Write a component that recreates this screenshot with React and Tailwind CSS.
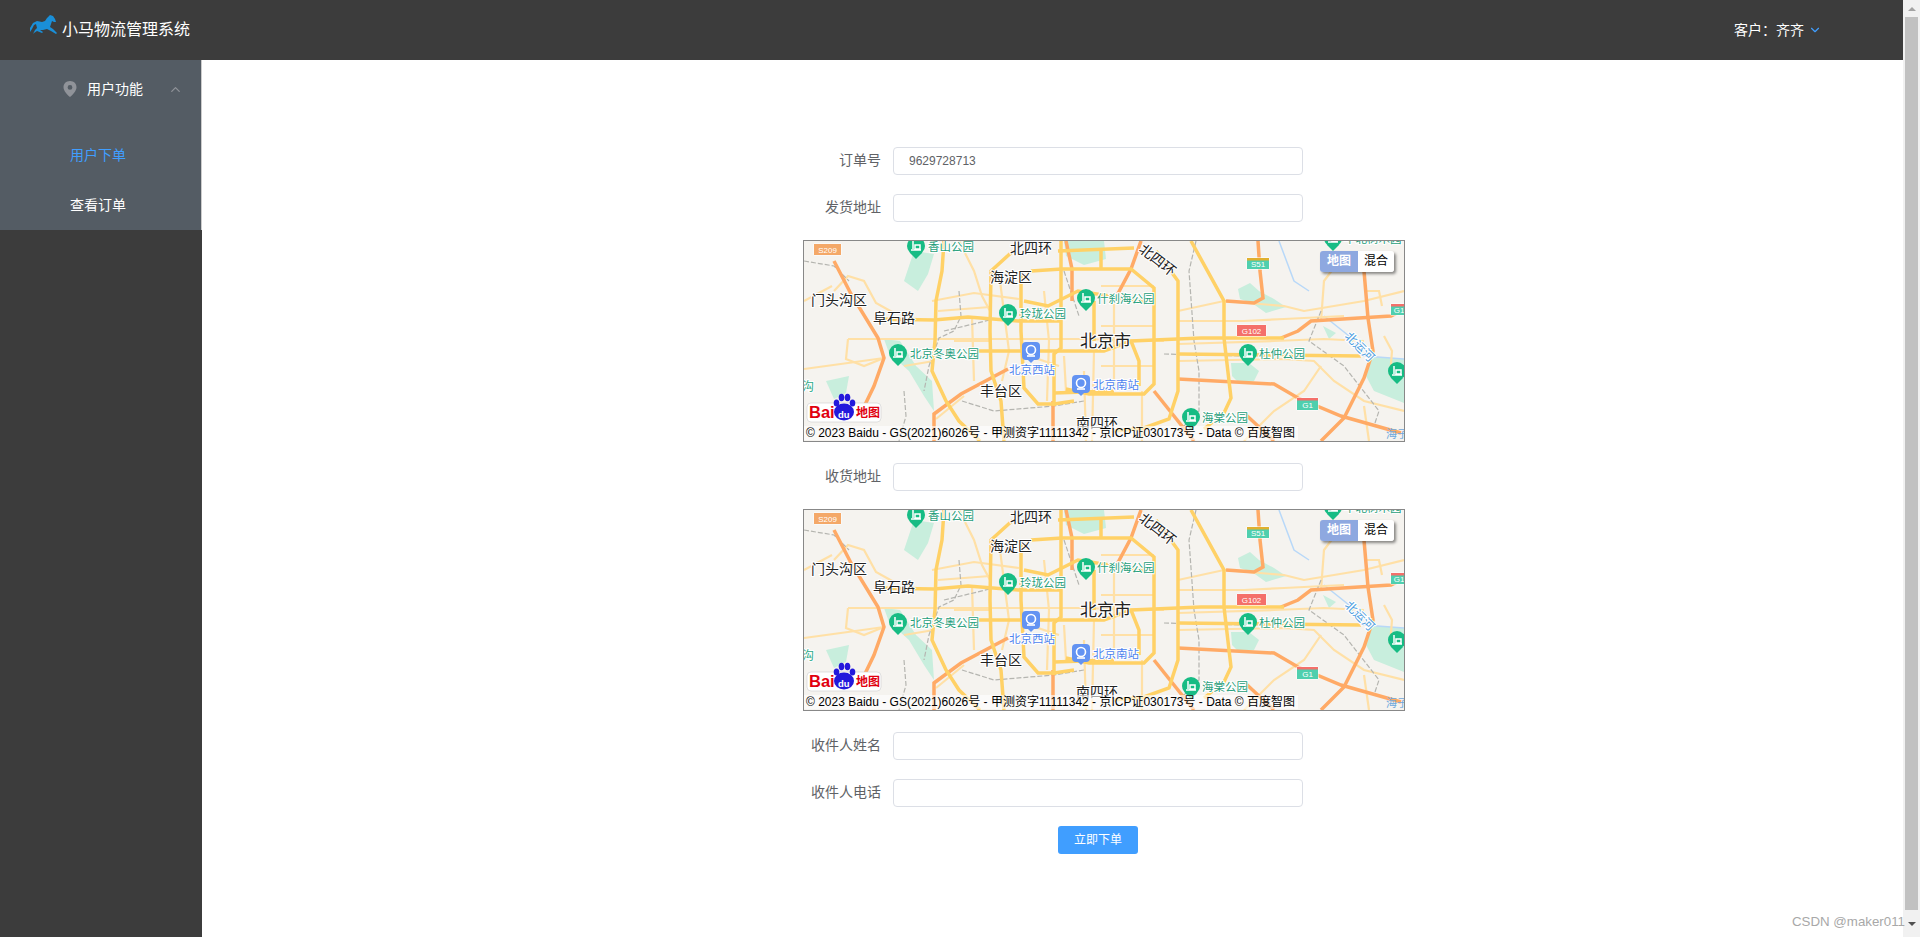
import { ChevronDown, ChevronUp } from 'lucide-react';

// road polylines in map coordinates (map is 600x200)
const LIGHT_ROADS = [
  'M44 98 L274 98 L360 100',
  'M30 50 L44 35 L60 40 L72 62 L90 72',
  'M44 98 L42 118 L60 125 L80 117',
  'M0 128 L44 122 L80 117',
  'M128 60 L170 52 L215 58',
  'M134 70 L186 66',
  'M168 76 L170 140',
  'M196 40 L205 110 L198 140',
  'M240 50 L245 100 L243 160',
  'M290 110 L288 200',
  'M310 60 L310 145',
  'M374 70 L420 60 L480 65 L500 70 L560 60 L600 50',
  'M374 80 L440 80 L480 78 L540 75',
  'M374 103 L470 100 L520 98 L560 100',
  'M374 120 L480 118 L510 120 L530 140 L560 160 L600 170',
  'M517 125 L500 150 L470 170 L440 200',
  'M517 80 L520 40 L535 20',
  'M560 50 L575 50 L578 65',
  'M580 95 L588 110 L586 135',
  'M560 165 L565 200',
  'M132 178 L160 155',
  'M338 150 L338 200',
  'M280 130 L282 200',
  'M155 0 L170 30 L178 55 L186 70',
  'M260 115 L262 150',
  'M100 125 L130 120',
  'M0 60 L28 45',
  'M150 100 L186 100',
  'M225 115 L255 125',
  'M297 45 L350 45',
  'M297 85 L350 85',
  'M297 125 L350 125',
];

const YELLOW_ROADS = [
  'M140 0 L138 30 L132 60 L131 100 L128 130 L142 160 L155 180 L176 200',
  'M209 10 L187 30 L186 90 L187 130 L197 160 L200 200',
  'M217 30 L217 90 L220 147 L234 163 L250 163 L270 160',
  'M70 78 L130 79 L164 76 L214 80 L258 80',
  'M174 110 L300 110 L327 100 L397 97 L480 97',
  'M257 0 L257 57 L257 107 L250 113 L250 165',
  'M254 10 L330 7',
  'M227 30 L258 28 L327 28 L350 47 L350 143 L340 153 L285 153 L262 148',
  'M220 60 L244 65 L274 50 L350 62',
  'M352 10 L374 40 L374 150 L365 178 L340 187 L310 190',
  'M387 0 L420 60 L420 97 L427 157 L420 172 L400 188',
  'M374 113 L557 115',
  'M250 152 L310 150',
  'M327 100 L335 120 L335 145',
  'M297 7 L297 28',
  'M290 60 L290 100',
];

const ORANGE_ROADS = [
  'M30 20 L47 53 L74 97 L80 117 L70 145 L58 170',
  'M130 200 L130 173 L157 153 L204 128',
  'M249 160 L249 200',
  'M454 0 L456 30 L459 57 L450 62 L422 60',
  'M477 97 L494 90 L507 80 L587 75 L601 68',
  'M374 138 L470 143 L494 157 L537 175 L597 192',
  'M560 30 L564 77 L569 110 L560 137 L540 177 L517 200',
  'M337 0 L327 28 L310 60',
  'M262 0 L268 28 L268 60',
  'M350 150 L390 200',
  'M440 172 L470 200',
];

const RAILS = [
  'M0 20 L30 25 L45 40',
  'M155 50 L157 75 L150 90 L135 97 L125 125 L120 150',
  'M140 90 L190 78',
  'M100 150 L102 175 L95 200',
  'M158 160 L190 170 L250 165 L280 160',
  'M260 30 L275 75',
  'M392 0 L385 30 L390 100 L395 130 L395 170 L375 190',
  'M360 113 L440 115',
  'M517 70 L505 100 L540 125 L575 170 L570 185',
];

const PARKS = [
  'M100 40 L110 10 L130 13 L124 33 L114 50 Z',
  'M80 98 L96 100 L112 125 L128 140 L130 170 L120 155 L105 130 L85 112 Z',
  'M434 48 L446 42 L455 50 L470 58 L482 66 L462 72 L448 62 L436 58 Z',
  'M427 122 L445 122 L455 130 L450 140 L435 142 L428 135 Z',
  'M565 115 L600 118 L600 162 L570 150 L562 135 Z',
  'M519 85 L532 92 L525 98 Z',
  'M260 0 L300 0 L302 18 L280 24 L262 15 Z',
  'M22 140 L45 135 L42 152 L30 158 Z',
];

const PINS = [
  { x: 112, y: 5, text: '香山公园', tx: 124 },
  { x: 204, y: 72, text: '玲珑公园', tx: 216 },
  { x: 94, y: 112, text: '北京冬奥公园', tx: 106 },
  { x: 282, y: 57, text: '什刹海公园', tx: 293 },
  { x: 444, y: 112, text: '杜仲公园', tx: 455 },
  { x: 387, y: 176, text: '海棠公园', tx: 398 },
  { x: 593, y: 130, text: '', tx: 0 },
  { x: 529, y: -3, text: '华北树木园', tx: 540 },
];

const LABELS = [
  { x: 206, y: 12, text: '北四环', size: 14 },
  { x: 186, y: 41, text: '海淀区', size: 14 },
  { x: 7, y: 64, text: '门头沟区', size: 14 },
  { x: 69, y: 82, text: '阜石路', size: 14 },
  { x: 276, y: 106, text: '北京市', size: 17 },
  { x: 176, y: 155, text: '丰台区', size: 14 },
  { x: 272, y: 187, text: '南四环', size: 14 },
  { x: -14, y: 150, text: '五沟', size: 12, fill: '#2ba888' },
];

const SHIELDS = [
  { x: 10, y: 3, w: 27, h: 11, text: 'S209', bg: '#f4a868', top: '#f4a868' },
  { x: 443, y: 17, w: 22, h: 11, text: 'S51', bg: '#4fcfae', top: '#e0b030' },
  { x: 433, y: 84, w: 29, h: 11, text: 'G102', bg: '#f4706a', top: '#f4706a' },
  { x: 493, y: 157, w: 21, h: 12, text: 'G1', bg: '#4fcfae', top: '#f4706a' },
  { x: 587, y: 63, w: 16, h: 11, text: 'G1', bg: '#4fcfae', top: '#f4706a' },
];

function Pin({ x, y, text, tx }) {
  return (
    <g>
      <path d={`M${x - 6} ${y + 7} L${x} ${y + 13} L${x + 6} ${y + 7} Z`} fill="#17bc84" />
      <circle cx={x} cy={y} r="9" fill="#17bc84" />
      <path d={`M${x - 3} ${y - 5} v8 M${x - 5} ${y + 4} h10 M${x - 1} ${y - 1} h5 v4 h-5 z`} stroke="#fff" strokeWidth="1.5" fill="none" />
      {text && (
        <text x={tx} y={y + 4.5} fontSize="11.5" fill="#1f9e7a" stroke="#fff" strokeWidth="2" paintOrder="stroke">
          {text}
        </text>
      )}
    </g>
  );
}

function Station({ x, y, text, tx, ty }) {
  return (
    <g>
      <path d={`M${x - 4} ${y + 8} L${x} ${y + 12} L${x + 4} ${y + 8} Z`} fill="#6393f2" />
      <rect x={x - 9} y={y - 9} width="18" height="18" rx="4" fill="#6393f2" />
      <circle cx={x} cy={y - 1} r="4.5" fill="none" stroke="#fff" strokeWidth="1.6" />
      <path d={`M${x - 4} ${y + 5} h8`} stroke="#fff" strokeWidth="1.6" />
      <text x={tx} y={ty} fontSize="11.5" fill="#4d83ee" stroke="#fff" strokeWidth="2" paintOrder="stroke">
        {text}
      </text>
    </g>
  );
}

function BaiduLogo() {
  return (
    <g>
      <rect x="3" y="162" width="74" height="19" rx="4" fill="#fff" stroke="#ccc" strokeWidth="0.6" />
      <text x="5" y="177" fontSize="16.5" fontWeight="700" fill="#e1000f">Bai</text>
      <ellipse cx="40" cy="171" rx="10" ry="8.5" fill="#2319dc" />
      <ellipse cx="32.5" cy="162" rx="2.8" ry="3.6" fill="#2319dc" />
      <ellipse cx="37.5" cy="156.5" rx="2.8" ry="3.8" fill="#2319dc" />
      <ellipse cx="43.5" cy="156.5" rx="2.8" ry="3.8" fill="#2319dc" />
      <ellipse cx="48.5" cy="162" rx="2.8" ry="3.6" fill="#2319dc" />
      <text x="34" y="177" fontSize="9.5" fontWeight="700" fill="#fff">du</text>
      <text x="52" y="176" fontSize="12" fontWeight="700" fill="#e1000f">地图</text>
    </g>
  );
}

function MapBox() {
  return (
    <div className="relative w-[602px] h-[202px] border border-[#888] overflow-hidden ml-[15px] bg-[#f5f3ef]">
      <svg width="600" height="200" viewBox="0 0 600 200" className="block">
        {PARKS.map((d) => <path key={d} d={d} fill="#c8eedd" />)}
        <path d="M475 0 L490 40 L505 50 M520 75 L545 95 L560 115 L600 118" fill="none" stroke="#b8d8f8" strokeWidth="1.5" />
        {LIGHT_ROADS.map((d) => <path key={d} d={d} fill="none" stroke="#ffe0a6" strokeWidth="2.2" />)}
        {RAILS.map((d) => <path key={d} d={d} fill="none" stroke="#b5b5b0" strokeWidth="1.2" strokeDasharray="5 2" />)}
        {ORANGE_ROADS.map((d) => <path key={d} d={d} fill="none" stroke="#ffaa66" strokeWidth="3.5" />)}
        {YELLOW_ROADS.map((d) => <path key={d} d={d} fill="none" stroke="#ffd166" strokeWidth="3.5" />)}
        {SHIELDS.map((s) => (
          <g key={s.x}>
            <rect x={s.x - 0.5} y={s.y - 0.5} width={s.w + 1} height={s.h + 1} rx="1" fill="#fff" />
            <rect x={s.x} y={s.y} width={s.w} height={s.h} fill={s.bg} />
            <rect x={s.x} y={s.y} width={s.w} height="2.5" fill={s.top} />
            <text x={s.x + s.w / 2} y={s.y + s.h - 2} fontSize="8" fill="#fff" textAnchor="middle">{s.text}</text>
          </g>
        ))}
        {PINS.map((p) => <Pin key={p.x} {...p} />)}
        <Station x={227} y={110} text="北京西站" tx={205} ty={133} />
        <Station x={277} y={143} text="北京南站" tx={289} ty={148} />
        {LABELS.map((l) => (
          <text key={l.text} x={l.x} y={l.y} fontSize={l.size} fill={l.fill || '#222'} stroke="#fff" strokeWidth="2" paintOrder="stroke">
            {l.text}
          </text>
        ))}
        <text transform="translate(334 10) rotate(38)" fontSize="14" fill="#222" stroke="#fff" strokeWidth="2" paintOrder="stroke">北四环</text>
        <text transform="translate(540 96) rotate(45)" fontSize="12" fill="#4d9de0" stroke="#fff" strokeWidth="2" paintOrder="stroke">北运河</text>
        <text x="582" y="197" fontSize="11" fill="#6fa8dc">海子</text>
        <BaiduLogo />
      </svg>

      {/* copyright strip */}
      <div className="absolute left-0 top-[185px] h-[14px] w-[494px] bg-white/60 pl-[2px] text-[12px] leading-[14px] text-black whitespace-nowrap">
        © 2023 Baidu - GS(2021)6026号 - 甲测资字11111342 - 京ICP证030173号 - Data © 百度智图
      </div>

      {/* map type switch */}
      <div className="absolute left-[516px] top-[10px] flex h-[21px] w-[74px] text-[12px] leading-[20px] shadow-[2px_2px_3px_rgba(0,0,0,0.45)] rounded-[3px] overflow-hidden">
        <span className="w-[38px] bg-[#8ea8e0] text-center font-bold text-white">地图</span>
        <span className="w-[36px] bg-white text-center text-black">混合</span>
      </div>
    </div>
  );
}

function Field({ label, value }) {
  return (
    <div className="flex items-center h-7">
      <label className="w-[93px] mr-[12px] pb-[1px] text-right text-[14px] text-[#606266] whitespace-nowrap">{label}</label>
      <input
        readOnly
        defaultValue={value}
        className="w-[410px] h-7 border border-[#dcdfe6] rounded-[4px] px-[15px] text-[12px] text-[#606266] bg-white outline-none"
      />
    </div>
  );
}

function Horse() {
  return (
    <svg width="27" height="20" viewBox="0 0 27 20" fill="#1a8fd8" className="block">
      <path d="M17 3 L20 0 L23 1 L25 4 L26 7 L24 7 L22 6 L21 9 L20 12 L23 14 L27 18 L26 19 L21 16 L17 14 L13 15 L10 15 L13 17 L12 18 L7 16 L4 18 L3 19 L5 15 L7 13 L6 9 L4 10 L2 14 L0 17 L0 13 L3 8 L7 6 L12 7 L15 6 Z" />
    </svg>
  );
}

function PinIcon() {
  return (
    <svg width="14" height="16" viewBox="0 0 14 16" className="block">
      <path fillRule="evenodd" fill="#909399" d="M7 0 C3 0 .5 2.8 .5 6.2 C.5 10 4.5 14 7 16 C9.5 14 13.5 10 13.5 6.2 C13.5 2.8 11 0 7 0 Z M7 4 A2.4 2.4 0 1 1 7 8.8 A2.4 2.4 0 1 1 7 4 Z" />
    </svg>
  );
}

export default function App() {
  return (
    <div className="relative flex h-[937px] w-[1920px] overflow-hidden bg-white font-['Liberation_Sans','Noto_Sans_CJK_SC',sans-serif]">
      <div className="flex w-[1903px] flex-col">
        {/* Header */}
        <header className="flex h-[60px] shrink-0 items-center bg-[#3c3c3c] pl-[30px] pr-[81px] text-white">
          <div className="mb-[10px]"><Horse /></div>
          <span className="ml-[5px] text-[16px]">小马物流管理系统</span>
          <span className="ml-auto text-[14px]">客户：齐齐</span>
          <ChevronDown size={14} className="ml-[4px] text-[#409eff]" />
        </header>

        <div className="flex min-h-0 flex-1">
          {/* Sidebar */}
          <aside className="w-[202px] shrink-0 bg-[#3c3c3c]">
            <nav className="h-[170px] bg-[#545c64] border-r border-[#ccc] text-[14px] text-white">
              <div className="flex h-[58px] items-center pl-[63px]">
                <PinIcon />
                <span className="ml-[10px]">用户功能</span>
                <ChevronUp size={15} className="ml-[25px] text-[#909399]" />
              </div>
              <div className="mt-[12px] flex h-[50px] items-center pl-[70px] text-[#409eff]">用户下单</div>
              <div className="flex h-[50px] items-center pl-[70px]">查看订单</div>
            </nav>
          </aside>

          {/* Form */}
          <main className="flex-1 bg-white pl-[586px] pt-[87px]">
            <div className="flex w-[617px] flex-col">
              <Field label="订单号" value="9629728713" />
              <div className="mt-[19px]"><Field label="发货地址" /></div>
              <div className="mt-[18px]"><MapBox /></div>
              <div className="mt-[21px]"><Field label="收货地址" /></div>
              <div className="mt-[18px]"><MapBox /></div>
              <div className="mt-[21px]"><Field label="收件人姓名" /></div>
              <div className="mt-[19px]"><Field label="收件人电话" /></div>
              <div className="mt-[19px] pl-[270px]">
                <button className="h-7 w-[80px] rounded-[3px] bg-[#409eff] text-[12px] text-white">立即下单</button>
              </div>
            </div>
          </main>
        </div>
      </div>

      {/* Scrollbar */}
      <div className="flex w-[17px] shrink-0 flex-col items-center bg-[#f1f1f1]">
        <div className="flex h-[17px] items-center justify-center">
          <div className="h-0 w-0 border-x-[4px] border-b-[4px] border-x-transparent border-b-[#a3a3a3]" />
        </div>
        <div className="h-[893px] w-[13px] bg-[#c1c1c1]" />
        <div className="flex h-[27px] items-center justify-center">
          <div className="h-0 w-0 border-x-[4px] border-t-[4px] border-x-transparent border-t-[#505050]" />
        </div>
      </div>

      <span className="absolute right-[15px] top-[913px] text-[13.3px] leading-[18px] text-[#a8a8a8]">CSDN @maker011</span>
    </div>
  );
}
